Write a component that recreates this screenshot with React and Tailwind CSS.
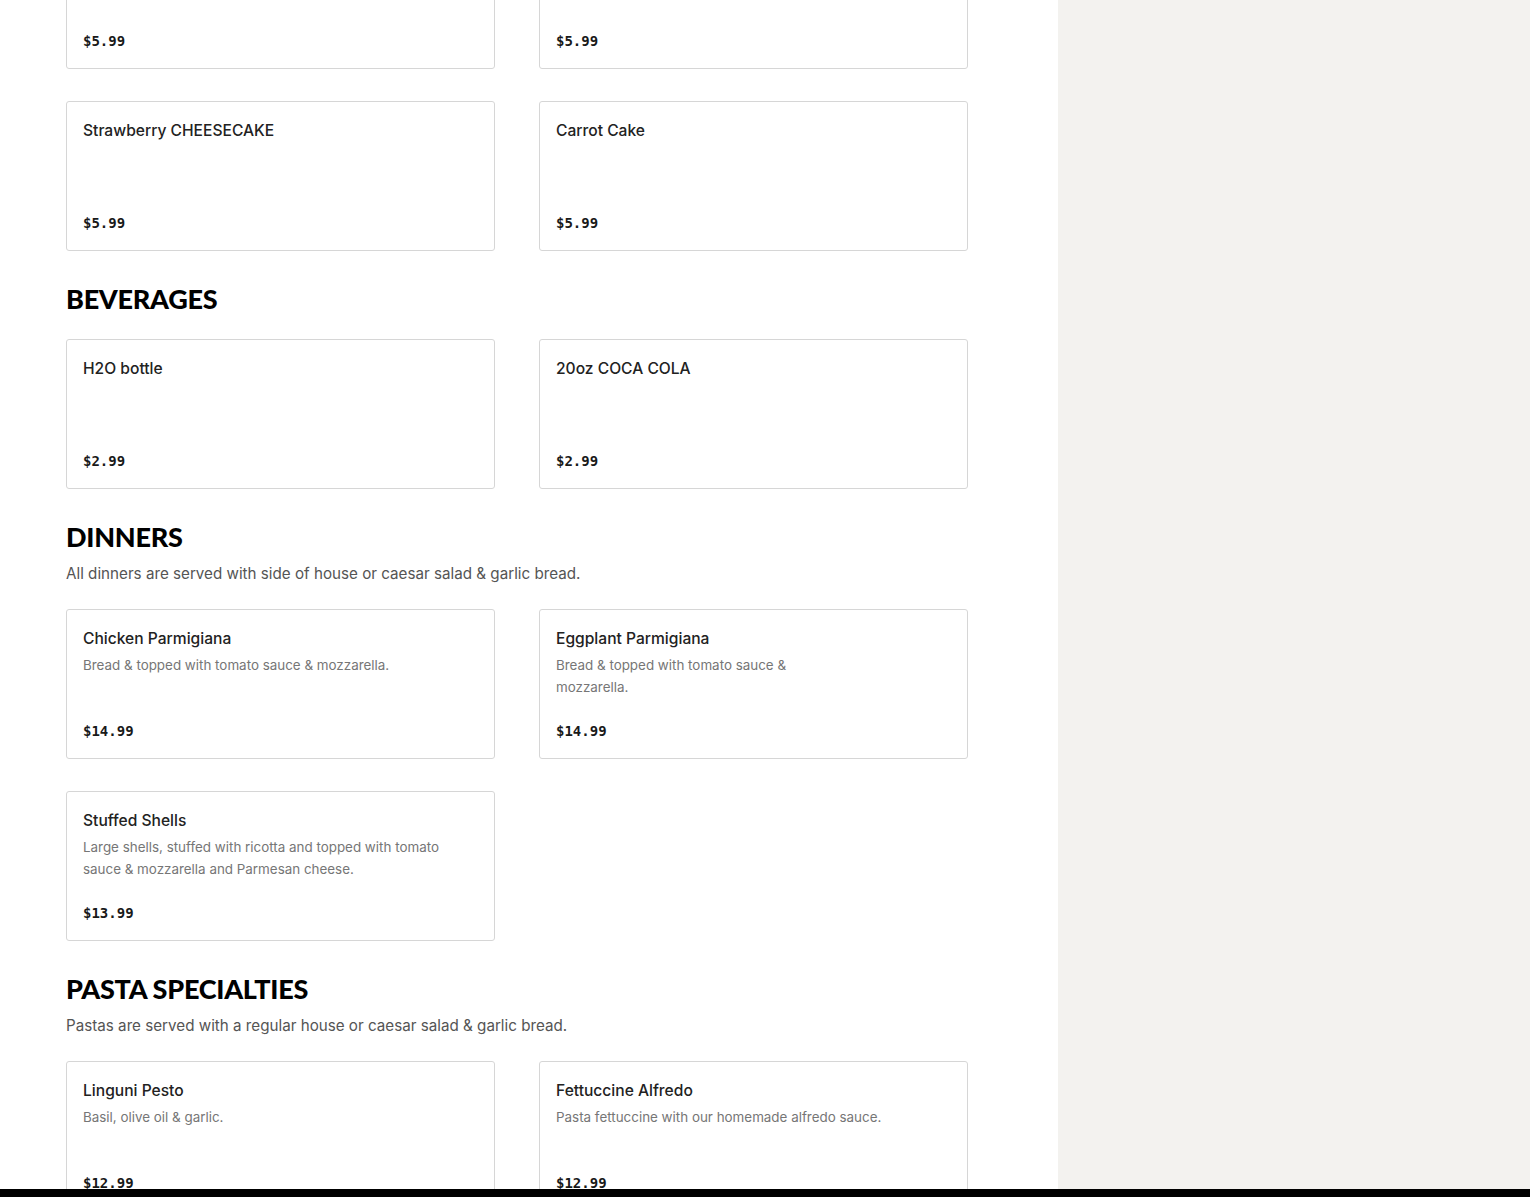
const sections = [
  {
    title: null,
    items: [
      { name: '', price: '$5.99' },
      { name: '', price: '$5.99' },
      { name: 'Strawberry CHEESECAKE', price: '$5.99' },
      { name: 'Carrot Cake', price: '$5.99' },
    ],
  },
  {
    title: 'BEVERAGES',
    items: [
      { name: 'H2O bottle', price: '$2.99' },
      { name: '20oz COCA COLA', price: '$2.99' },
    ],
  },
  {
    title: 'DINNERS',
    note: 'All dinners are served with side of house or caesar salad & garlic bread.',
    items: [
      { name: 'Chicken Parmigiana', desc: 'Bread & topped with tomato sauce & mozzarella.', price: '$14.99' },
      { name: 'Eggplant Parmigiana', desc: 'Bread & topped with tomato sauce & mozzarella.', price: '$14.99', narrow: true },
      { name: 'Stuffed Shells', desc: 'Large shells, stuffed with ricotta and topped with tomato sauce & mozzarella and Parmesan cheese.', price: '$13.99' },
    ],
  },
  {
    title: 'PASTA SPECIALTIES',
    note: 'Pastas are served with a regular house or caesar salad & garlic bread.',
    items: [
      { name: 'Linguni Pesto', desc: 'Basil, olive oil & garlic.', price: '$12.99' },
      { name: 'Fettuccine Alfredo', desc: 'Pasta fettuccine with our homemade alfredo sauce.', price: '$12.99' },
    ],
  },
];

function MenuCard({ item }) {
  return (
    <div className="h-[150px] rounded-[3px] border border-[#d6d6d6] bg-white px-4 pt-[15px] pb-[15px] flex flex-col justify-between">
      <div>
        <div className="text-[15.6px] leading-[28px] font-medium text-[#222]">{item.name}</div>
        {item.desc && (
          <p className={`mt-[1px] text-[13.4px] leading-[22px] text-[#767676] ${item.narrow ? 'max-w-[240px]' : 'max-w-[370px]'}`}>
            {item.desc}
          </p>
        )}
      </div>
      <div className="text-[14px] leading-[24px] font-bold text-[#191919] font-['DejaVu_Sans_Mono',monospace]">
        {item.price}
      </div>
    </div>
  );
}

export default function App() {
  return (
    <div className="flex min-h-[1197px] bg-white font-['Inter',sans-serif] overflow-hidden">
      <main className="w-[1058px] shrink-0 pl-[66px]">
        <div className="w-[902px] -mt-[81px]">
          {sections.map((s, i) => (
            <section key={i} className={s.title ? 'mt-[32px]' : ''}>
              {s.title && (
                <div className={s.note ? 'mb-[23px]' : 'mb-[24px]'}>
                  <h2 className="text-[27px] leading-[32px] font-black tracking-[-0.01em] text-black font-['Lato',sans-serif]">
                    {s.title}
                  </h2>
                  {s.note && (
                    <p className="mt-[9px] text-[15.2px] leading-[24px] text-[#555]">{s.note}</p>
                  )}
                </div>
              )}
              <div className="grid grid-cols-2 gap-x-[44px] gap-y-[32px]">
                {s.items.map((item, j) => (
                  <MenuCard key={j} item={item} />
                ))}
              </div>
            </section>
          ))}
        </div>
      </main>
      <aside className="flex-1 bg-[#f3f2ef]" />
      <div className="fixed bottom-0 left-0 right-0 h-[8px] bg-black" />
    </div>
  );
}
